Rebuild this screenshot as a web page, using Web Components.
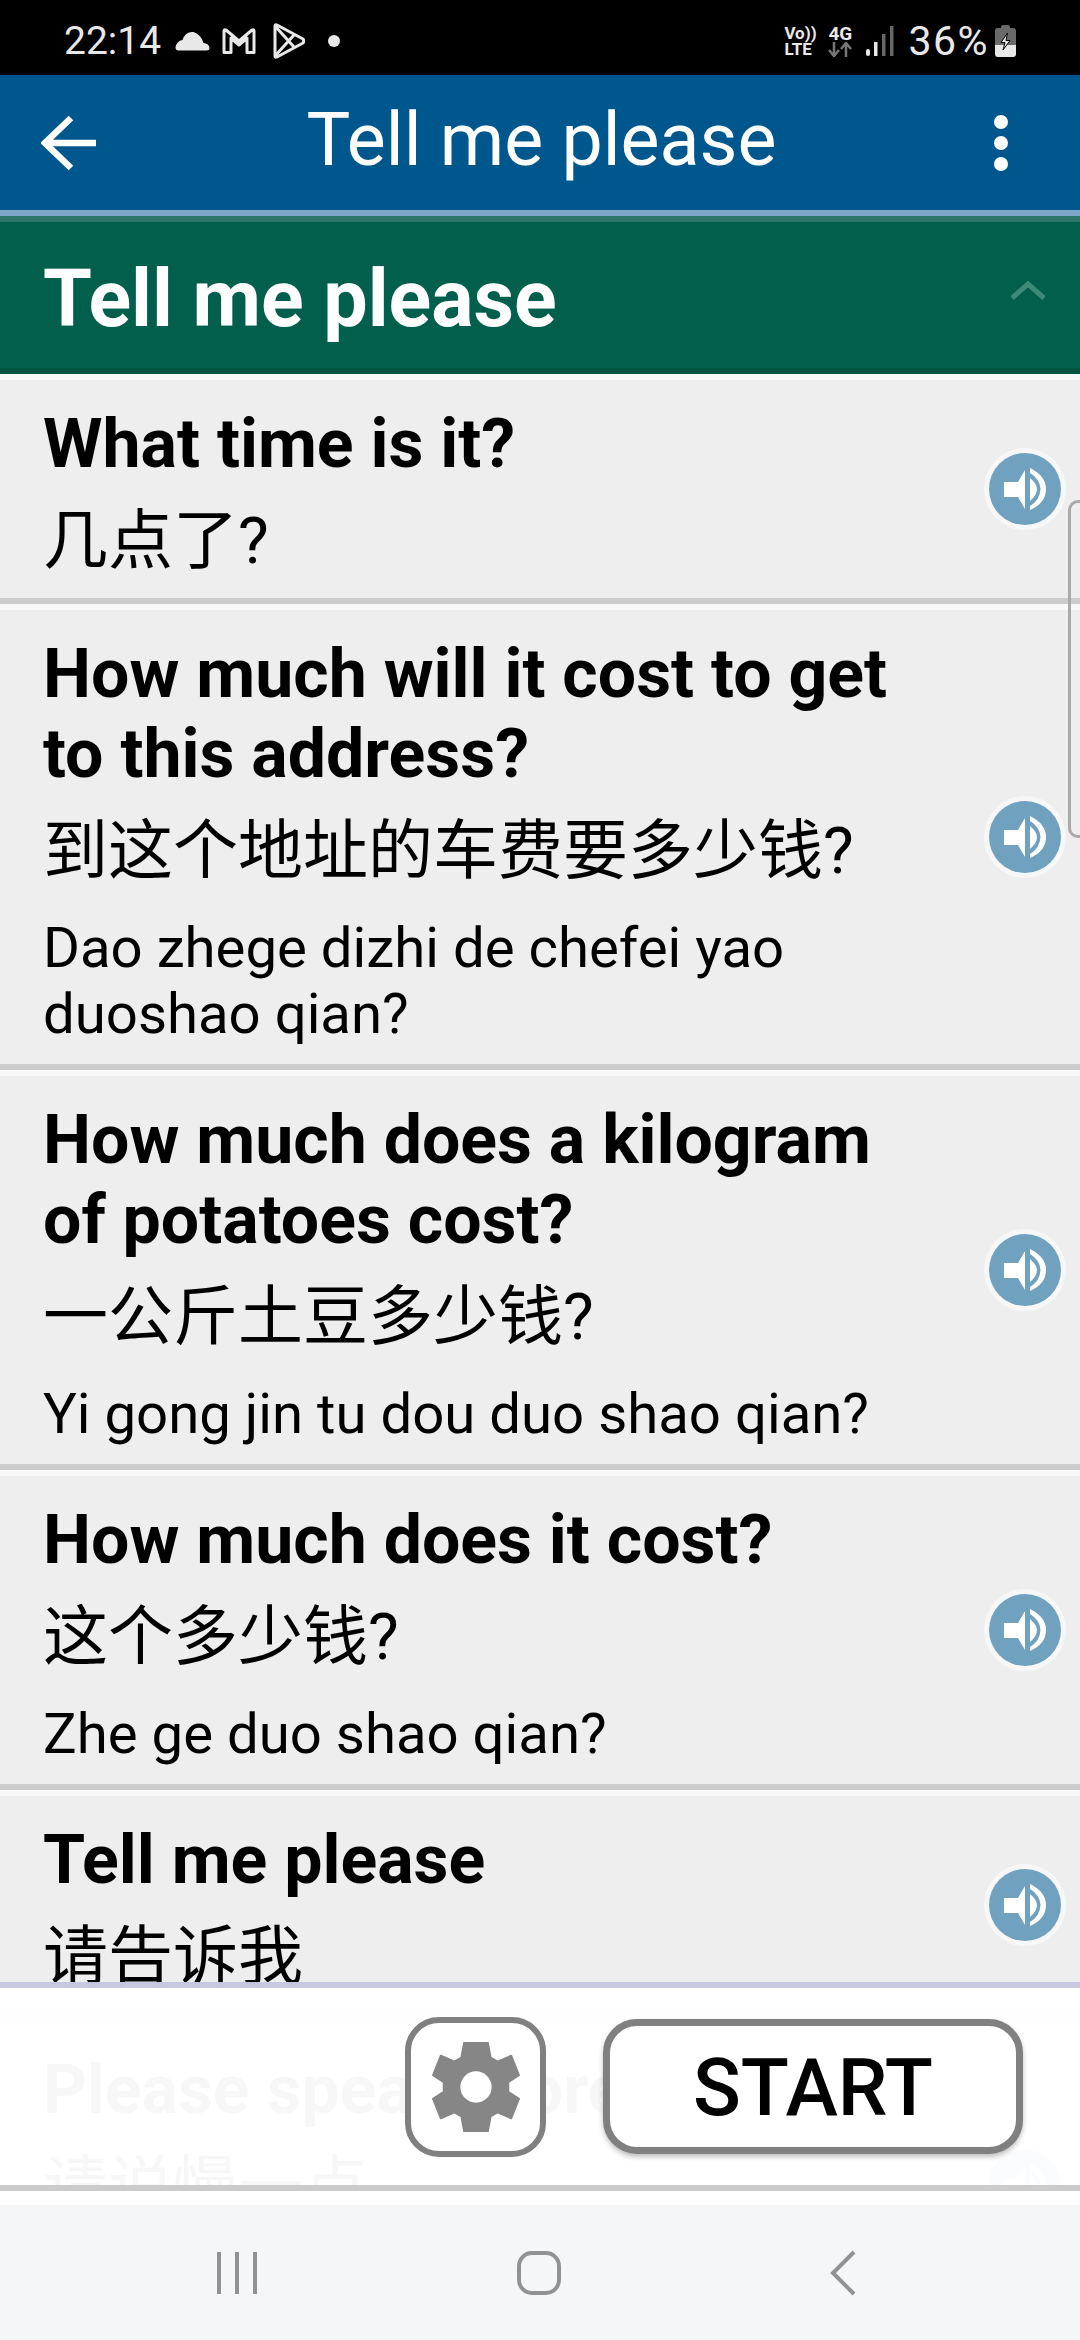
<!DOCTYPE html>
<html>
<head>
<meta charset="utf-8">
<title>Tell me please</title>
<style>
    html, body{
        margin: 0;
        padding: 0;
        background: white;
    }
    body{
        width: 1080px;
        height: 2340px;
        overflow: hidden;
        display: flex;
        flex-direction: column;
        font-family: Roboto, "Noto Sans CJK SC", sans-serif;
    }
</style>
</head>
<body>
<status-bar></status-bar>
<app-bar title="Tell me please"></app-bar>
<section-header>Tell me please</section-header>
<phrase-list>
    <phrase-row>
        <span slot="en">What time is it?</span>
        <span slot="zh">几点了?</span>
    </phrase-row>
    <phrase-row>
        <span slot="en">How much will it cost to get<br>to this address?</span>
        <span slot="zh">到这个地址的车费要多少钱?</span>
        <span slot="pinyin">Dao zhege dizhi de chefei yao<br>duoshao qian?</span>
    </phrase-row>
    <phrase-row>
        <span slot="en">How much does a kilogram<br>of potatoes cost?</span>
        <span slot="zh">一公斤土豆多少钱?</span>
        <span slot="pinyin">Yi gong jin tu dou duo shao qian?</span>
    </phrase-row>
    <phrase-row>
        <span slot="en">How much does it cost?</span>
        <span slot="zh">这个多少钱?</span>
        <span slot="pinyin">Zhe ge duo shao qian?</span>
    </phrase-row>
    <phrase-row>
        <span slot="en">Tell me please</span>
        <span slot="zh">请告诉我</span>
    </phrase-row>
    <phrase-row style="min-height: 318px">
        <span slot="en">Please speak more slowly</span>
        <span slot="zh">请说慢一点</span>
    </phrase-row>
    <bottom-panel slot="overlay"></bottom-panel>
</phrase-list>
<nav-bar></nav-bar>

<script>
class StatusBar extends HTMLElement {
    constructor(){
        super();
        let shadowRoot = this.attachShadow({mode: 'open'});
        shadowRoot.innerHTML = `
            <style>
                :host{
                    display: flex;
                    align-items: center;
                    height: 75px;
                    flex: none;
                    background: black;
                    color: #e8e8e8;
                    font-family: Roboto, sans-serif;
                    box-sizing: border-box;
                    padding: 7px 64px 0 64px;
                }
                .time, .pct{
                    font-size: 39px;
                    font-weight: 400;
                    line-height: 68px;
                }
                .pct{
                    font-size: 41px;
                    letter-spacing: 1.500px;
                    margin-left: 14px;
                }
                svg{
                    display: block;
                    flex: none;
                }
                .spacer{
                    flex: 1;
                }
                .volte{
                    font-size: 17px;
                    line-height: 16px;
                    font-weight: 700;
                    width: 30px;
                    margin-right: 12px;
                }
                .g4{
                    width: 28px;
                    margin-right: 12px;
                    display: flex;
                    flex-direction: column;
                    align-items: center;
                    font-size: 19px;
                    line-height: 17px;
                    font-weight: 700;
                }
            </style>
            <span class="time">22:14</span>
            <svg style="margin-left:14px" width="35" height="22" viewBox="0 0 34 22"><path d="M3 20.500 H31 Q34 20.500 34 18 Q33.500 13.500 28 13 Q26 5 18 2 Q10 1 7 10 Q1 11 0 17.500 Q0 20.500 3 20.500Z" fill="#e8e8e8"/></svg>
            <svg style="margin-left:11px" width="36" height="28" viewBox="0 0 34 28"><path d="M2 25.500 V4 Q2 2 4 3 L17 14 L30 3 Q32 2 32 4 V25.500 H25 V11 L17 18 L9 11 V25.500Z" fill="none" stroke="#e8e8e8" stroke-width="3" stroke-linejoin="round"/></svg>
            <svg style="margin-left:16px" width="32" height="36" viewBox="0 0 32 36"><path d="M2 3 Q2 1 4 2 L30 16 Q31.500 18 30 20 L4 34 Q2 35 2 33Z M2 3 L21 24 M2 33 L21 12" fill="none" stroke="#e8e8e8" stroke-width="3" stroke-linejoin="round"/></svg>
            <svg style="margin-left:23px" width="12" height="12" viewBox="0 0 12 12"><circle cx="6" cy="6" r="6" fill="#e8e8e8"/></svg>
            <span class="spacer"></span>
            <span class="volte">Vo))<br>LTE</span>
            <span class="g4">4G
                <svg width="26" height="15" viewBox="0 0 26 15"><path d="M7 0 V13 M2 8 L7 14 L12 8" fill="none" stroke="#777" stroke-width="2.500"/><path d="M19 15 V2 M14 7 L19 1 L24 7" fill="none" stroke="#777" stroke-width="2.500"/></svg>
            </span>
            <svg width="28" height="30" viewBox="0 0 28 30"><rect x="0" y="23" width="4" height="7" rx="2" fill="#e8e8e8"/><rect x="8" y="16" width="3.500" height="14" fill="#e8e8e8"/><rect x="16" y="8" width="3.500" height="22" fill="#666"/><rect x="24" y="0" width="3.500" height="30" fill="#666"/></svg>
            <span class="pct">36%</span>
            <svg style="margin-left:6px" width="21" height="32" viewBox="0 0 21 32"><path d="M6 2 Q6 0 8 0 H13 Q15 0 15 2 V3 H18 Q21 3 21 6 V20 H0 V6 Q0 3 3 3 H6Z" fill="#6a6a6a"/><path d="M0 20 H21 V29 Q21 32 18 32 H3 Q0 32 0 29Z" fill="#e8e8e8"/><path d="M12.500 8 L6 17.500 H10 L8 25 L15 15.500 H11Z" fill="#e8e8e8" stroke="#000" stroke-width="1"/></svg>
        `;
    }
}
customElements.define('status-bar', StatusBar);

class AppBar extends HTMLElement {
    constructor(){
        super();
        let shadowRoot = this.attachShadow({mode: 'open'});
        shadowRoot.innerHTML = `
            <style>
                :host{
                    display: flex;
                    flex: none;
                    align-items: center;
                    height: 135px;
                    background: #00578e;
                    border-bottom: 6px solid #7fa6c9;
                    color: white;
                    padding: 0 72px 0 41px;
                }
                h1{
                    flex: 1;
                    margin: 0;
                    text-align: center;
                    font-size: 73.500px;
                    font-weight: 400;
                    line-height: 131px;
                    padding: 0 8px 4px 0;
                }
                svg{
                    display: block;
                    flex: none;
                }
            </style>
            <svg width="56" height="56" viewBox="0 0 56 56"><path d="M55 28 H4 M30 3 L4 28 L30 53" fill="none" stroke="white" stroke-width="6.500"/></svg>
            <h1></h1>
            <svg width="14" height="56" viewBox="0 0 14 56"><circle cx="7" cy="7" r="7" fill="white"/><circle cx="7" cy="28" r="7" fill="white"/><circle cx="7" cy="49" r="7" fill="white"/></svg>
        `;
        shadowRoot.querySelector('h1').textContent = this.getAttribute('title');
    }
}
customElements.define('app-bar', AppBar);

class SectionHeader extends HTMLElement {
    constructor(){
        super();
        let shadowRoot = this.attachShadow({mode: 'open'});
        shadowRoot.innerHTML = `
            <style>
                :host{
                    display: flex;
                    flex: none;
                    align-items: center;
                    height: 146px;
                    background: #025f4c;
                    border-top: 6px solid #2d7568;
                    border-bottom: 6px solid #04533f;
                    padding: 0 35px 0 43px;
                    color: white;
                    font-size: 79px;
                    font-weight: 700;
                    font-family: Roboto, sans-serif;
                }
                .label{
                    flex: 1;
                    padding-top: 8px;
                }
                svg{
                    display: block;
                    margin-bottom: 10px;
                }
            </style>
            <span class="label"><slot></slot></span>
            <svg width="34" height="19" viewBox="0 0 34 19"><path d="M1 17 L17 3 L33 17" fill="none" stroke="#3d8a78" stroke-width="5"/></svg>
        `;
    }
}
customElements.define('section-header', SectionHeader);

class PhraseList extends HTMLElement {
    constructor(){
        super();
        let shadowRoot = this.attachShadow({mode: 'open'});
        shadowRoot.innerHTML = `
            <style>
                :host{
                    display: block;
                    position: relative;
                    height: 1817px;
                    flex: none;
                    overflow: hidden;
                }
                .scroll-thumb{
                    position: absolute;
                    right: -10px;
                    top: 126px;
                    width: 16px;
                    height: 332px;
                    border: 3px solid #aaa;
                    border-radius: 10px;
                }
                .panel{
                    position: absolute;
                    left: 0;
                    right: 0;
                    bottom: 0;
                }
            </style>
            <slot></slot>
            <div class="scroll-thumb"></div>
            <div class="panel"><slot name="overlay"></slot></div>
        `;
    }
}
customElements.define('phrase-list', PhraseList);

class PhraseRow extends HTMLElement {
    constructor(){
        super();
        let shadowRoot = this.attachShadow({mode: 'open'});
        shadowRoot.innerHTML = `
            <style>
                :host{
                    display: flex;
                    align-items: center;
                    background: #eee;
                    border-top: 6px solid #f8f8f8;
                    border-bottom: 6px solid #ccc;
                    color: black;
                    font-family: Roboto, "Noto Sans CJK SC", sans-serif;
                }
                .text{
                    flex: 1;
                    align-self: flex-start;
                    padding: 24px 0 12.500px 43px;
                }
                .en{
                    font-size: 68px;
                    font-weight: 700;
                    line-height: 80px;
                }
                .zh{
                    margin-top: 11.500px;
                    font-size: 65px;
                    line-height: 90px;
                }
                .pinyin{
                    margin: 19.500px 0 4.500px;
                    font-size: 56.300px;
                    line-height: 66px;
                }
                .pinyin.empty{
                    display: none;
                }
                speak-button{
                    margin-right: 14px;
                }
            </style>
            <div class="text">
                <div class="en"><slot name="en"></slot></div>
                <div class="zh"><slot name="zh"></slot></div>
                <div class="pinyin"><slot name="pinyin"></slot></div>
            </div>
            <speak-button></speak-button>
        `;
        if(!this.querySelector('[slot=pinyin]')){
            shadowRoot.querySelector('.pinyin').classList.add('empty');
        }
    }
}
customElements.define('phrase-row', PhraseRow);

class SpeakButton extends HTMLElement {
    constructor(){
        super();
        let shadowRoot = this.attachShadow({mode: 'open'});
        shadowRoot.innerHTML = `
            <style>
                :host{
                    display: block;
                    flex: none;
                    width: 82px;
                    height: 82px;
                }
                svg{
                    display: block;
                }
            </style>
            <svg width="82" height="82" viewBox="-41 -41 82 82">
                <circle r="41" fill="#f7f7f7"/>
                <circle r="36" fill="#70a2c0"/>
                <path d="M-21 -7 H-7 L0 -19 V20 L-7 8 H-21Z" fill="white"/>
                <path d="M5 -11 Q12 -5 12 0 Q12 6 5 12Z" fill="white"/>
                <path d="M5 -21 Q21 -13 21 0 Q21 14 5 21 V17 Q15 11 15.500 0 Q15 -10 5 -16Z" fill="white"/>
            </svg>
        `;
    }
}
customElements.define('speak-button', SpeakButton);

class BottomPanel extends HTMLElement {
    constructor(){
        super();
        let shadowRoot = this.attachShadow({mode: 'open'});
        shadowRoot.innerHTML = `
            <style>
                :host{
                    display: flex;
                    justify-content: flex-end;
                    align-items: center;
                    height: 197px;
                    background: rgba(255, 255, 255, 0.97);
                    border-top: 6px solid rgba(130, 130, 190, 0.45);
                    border-bottom: 6px solid #ccc;
                    padding-right: 57px;
                    font-family: Roboto, sans-serif;
                }
                .settings{
                    box-sizing: border-box;
                    width: 141px;
                    height: 140px;
                    border: 6px solid #808080;
                    border-radius: 34px;
                    margin-right: 57px;
                    display: flex;
                    align-items: center;
                    justify-content: center;
                    background: white;
                }
                .start{
                    box-sizing: border-box;
                    width: 420px;
                    height: 135px;
                    border: 7px solid #808080;
                    border-radius: 34px;
                    background: white;
                    box-shadow: 0 3px 5px rgba(0, 0, 0, 0.25);
                    font-size: 79px;
                    font-weight: 500;
                    line-height: 125px;
                    text-align: center;
                    color: black;
                }
            </style>
            <div class="settings">
                <svg width="88" height="90" viewBox="-45 -46 90 92"><path fill="#868686" d="M-12 -46 H12 L15 -30 L22 -26 L36 -32 L44 -12 L33 -5 V5 L44 12 L36 32 L22 26 L15 30 L12 46 H-12 L-15 30 L-22 26 L-36 32 L-44 12 L-33 5 V-5 L-44 -12 L-36 -32 L-22 -26 L-15 -30Z M0 -17 A17 17 0 1 0 0 17 A17 17 0 1 0 0 -17Z" fill-rule="evenodd" stroke="#868686" stroke-width="2" stroke-linejoin="round"/></svg>
            </div>
            <div class="start">START</div>
        `;
    }
}
customElements.define('bottom-panel', BottomPanel);

class NavBar extends HTMLElement {
    constructor(){
        super();
        let shadowRoot = this.attachShadow({mode: 'open'});
        shadowRoot.innerHTML = `
            <style>
                :host{
                    display: flex;
                    flex: 1;
                    align-items: center;
                    background: #f5f6f8;
                    border-top: 14px solid white;
                    padding-left: 217px;
                }
                svg{
                    display: block;
                }
            </style>
            <svg width="40" height="44" viewBox="0 0 40 44"><path d="M2 1 V43 M20 1 V43 M38 1 V43" stroke="#929292" stroke-width="4" fill="none"/></svg>
            <svg style="margin-left:260px" width="44" height="44" viewBox="0 0 44 44"><rect x="2" y="2" width="40" height="40" rx="13" fill="none" stroke="#929292" stroke-width="4"/></svg>
            <svg style="margin-left:269px" width="26" height="46" viewBox="0 0 26 46"><path d="M24 2 L3 23 L24 44" stroke="#929292" stroke-width="4" fill="none"/></svg>
        `;
    }
}
customElements.define('nav-bar', NavBar);
</script>
</body>
</html>
